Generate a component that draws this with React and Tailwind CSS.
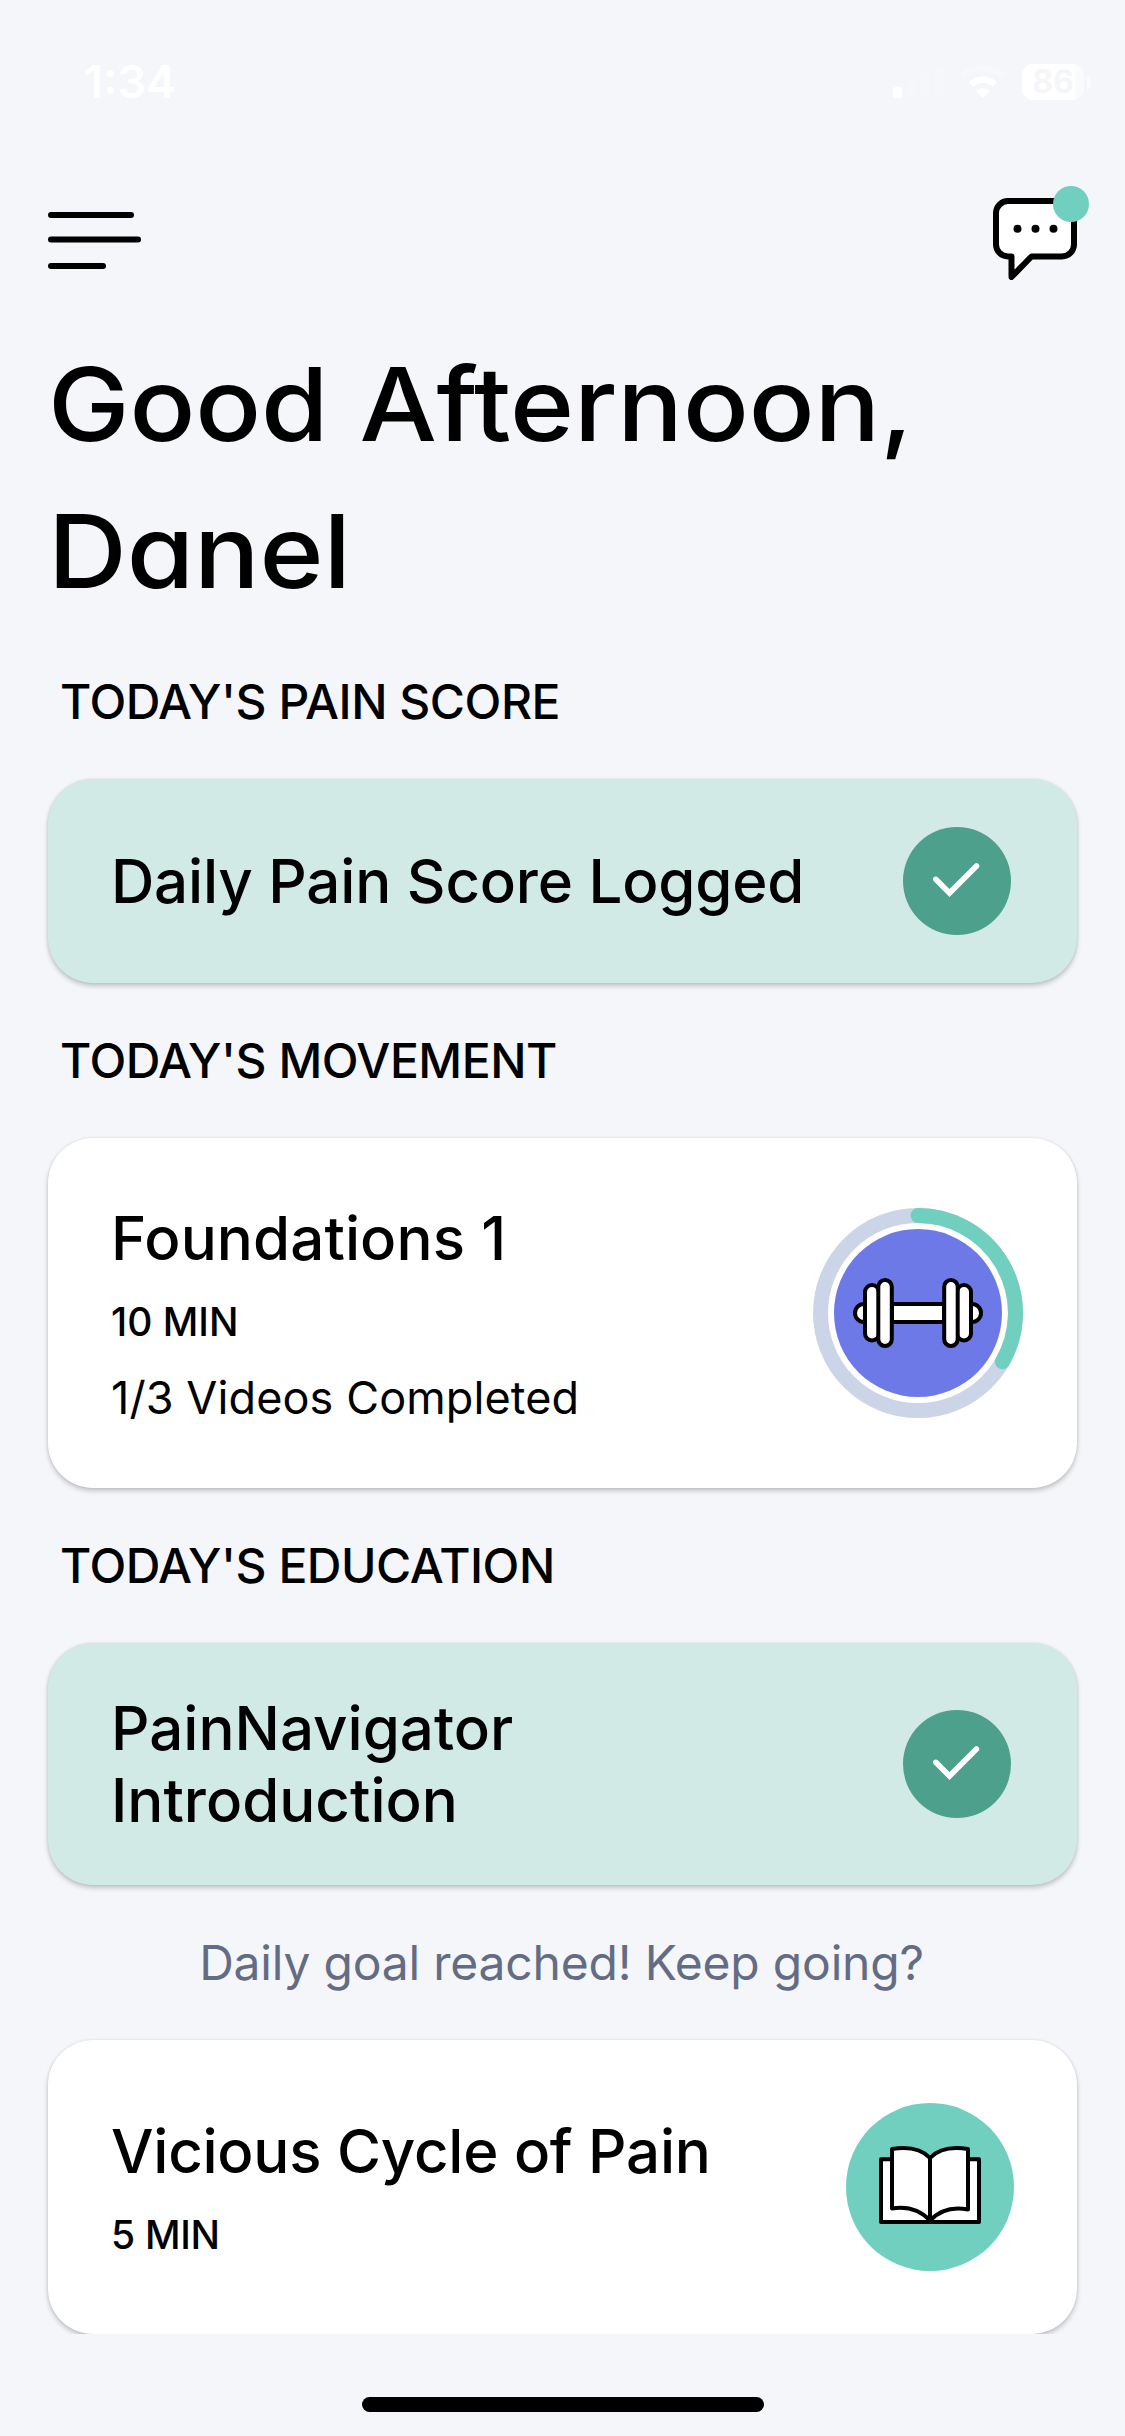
const INTER = "font-['Inter',sans-serif]";

function StatusBar() {
  return (
    <header className="flex h-[132px] items-start justify-between pl-[84px] pr-[34px] pt-[60px] text-white">
      <span className="text-[45px] leading-[44px] font-semibold">1:34</span>
      <div className="flex items-center pt-[4px]">
        <svg className="h-[36px] w-[52px]" viewBox="0 0 52 36" fill="#fff">
          <rect x="0" y="23" width="9" height="11" rx="2.5" />
          <rect x="14" y="17" width="9" height="17" rx="2.5" opacity=".2" />
          <rect x="28" y="10" width="9" height="24" rx="2.5" opacity=".2" />
          <rect x="42" y="2" width="9" height="32" rx="2.5" opacity=".2" />
        </svg>
        <svg className="ml-[14px] h-[36px] w-[48px]" viewBox="0 0 48 36" fill="none" stroke="#fff">
          <path d="M3 12.500a30 30 0 0 1 42 0" strokeWidth="7" opacity=".25" />
          <path d="M12 20.500a17.500 17.500 0 0 1 24 0" strokeWidth="6.500" />
          <path d="M24 34l-7-7a10 10 0 0 1 14 0z" fill="#fff" stroke="none" />
        </svg>
        <div className="ml-[15px] flex h-[36px] w-[62px] items-center justify-center rounded-[11px] bg-[linear-gradient(90deg,#fff_86%,#fafbfd_86%)] text-[32px] leading-[36px] font-bold text-[#f4f6fa]">
          86
        </div>
        <div className="ml-[3px] h-[13px] w-[4px] rounded-r-full bg-[#fafbfd]" />
      </div>
    </header>
  );
}

function TopBar() {
  return (
    <div className="flex h-[198px] items-start justify-between pl-[48px] pr-[36px] pt-[54px]">
      <svg className="mt-[26px] h-[58px] w-[93px]" viewBox="0 0 93 58">
        <rect x="0" y="0" width="86" height="6" rx="3" />
        <rect x="0" y="24.500" width="93" height="6" rx="3" />
        <rect x="0" y="51" width="58" height="6" rx="3" />
      </svg>
      <svg className="h-[94px] w-[96px]" viewBox="0 0 96 94">
        <path
          d="M15 15H69A12 12 0 0 1 81 27V58.500A12 12 0 0 1 69 70.500H38.500L18.500 91V70.500H15A12 12 0 0 1 3 58.500V27A12 12 0 0 1 15 15Z"
          fill="#fff"
          stroke="#000"
          strokeWidth="6"
          strokeLinejoin="round"
        />
        <circle cx="24.500" cy="42.700" r="4" />
        <circle cx="42.500" cy="42.700" r="4" />
        <circle cx="60.500" cy="42.700" r="4" />
        <circle cx="78" cy="18" r="18" fill="#70cfbe" />
      </svg>
    </div>
  );
}

function SectionTitle({ children }) {
  return <h2 className="pl-[12px] text-[48px] leading-[58px] font-medium tracking-[-0.48px]">{children}</h2>;
}

function Card({ className, children }) {
  return (
    <section
      className={
        "flex items-center justify-between rounded-[45px] pl-[63px] shadow-[0_3px_5px_rgba(0,0,0,0.2),0_0_3px_rgba(0,0,0,0.1)] " +
        className
      }
    >
      {children}
    </section>
  );
}

function CheckBadge() {
  return (
    <svg className="h-[108px] w-[108px]" viewBox="0 0 108 108">
      <circle cx="54" cy="54" r="54" fill="#4da08b" />
      <path d="M32.800 52.300L46.500 66L73.500 39" fill="none" stroke="#fff" strokeWidth="5.500" strokeLinecap="round" />
    </svg>
  );
}

function MovementBadge() {
  return (
    <svg className="h-[210px] w-[210px]" viewBox="0 0 210 210">
      <circle cx="105" cy="105" r="97.500" fill="none" stroke="#ccd5e8" strokeWidth="15" />
      <path d="M105 7.500A97.500 97.500 0 0 1 189.400 153.750" fill="none" stroke="#70cfbe" strokeWidth="15" strokeLinecap="round" />
      <circle cx="105" cy="105" r="84" fill="#6d79e7" />
      <g fill="#fff" stroke="#000" strokeWidth="4">
        <rect x="79" y="96" width="52" height="18" />
        <path d="M53 96H51A9 9 0 0 0 51 114H53Z" />
        <path d="M157 96H159A9 9 0 0 1 159 114H157Z" />
        <rect x="52" y="77" width="14" height="55.500" rx="7" />
        <rect x="144" y="77" width="14" height="55.500" rx="7" />
        <rect x="65.300" y="72" width="13.500" height="66" rx="6.700" />
        <rect x="131.200" y="72" width="13.500" height="66" rx="6.700" />
      </g>
    </svg>
  );
}

function BookBadge() {
  return (
    <svg className="h-[168px] w-[168px]" viewBox="0 0 168 168">
      <circle cx="84" cy="84" r="84" fill="#70cfbe" />
      <g fill="#fff" stroke="#000" strokeWidth="4" strokeLinejoin="round">
        <rect x="35" y="56.300" width="98" height="62.700" />
        <path d="M84 117.500C74 107 61 103 46 105.500V46C62 43.500 76 46.500 84 55C92 46.500 106 43.500 122 46V106.500C107 103.500 94 107 84 117.500Z" />
        <path d="M84 55V118" />
      </g>
    </svg>
  );
}

export default function App() {
  return (
    <div className={"flex h-[2436px] w-[1125px] flex-col overflow-hidden bg-[#f4f6fa] text-black " + INTER}>
      <StatusBar />
      <TopBar />
      <main className="h-[2004px] overflow-hidden px-[48px] pt-px">
        <h1 className="origin-left scale-x-[1.07] text-[102px] leading-[147px] font-medium tracking-[-0.1px] [word-spacing:2px] [font-feature-settings:'cv11'] [font-variant-ligatures:none]">
          Good Afternoon,
          <br />
          Danel
        </h1>
        <div className="mt-[48px]">
          <SectionTitle>TODAY'S PAIN SCORE</SectionTitle>
        </div>
        <Card className="mt-[48px] h-[204px] bg-[#d1eae5] pr-[66px]">
          <p className="text-[60px] leading-[72px] font-medium tracking-[-0.2px]">Daily Pain Score Logged</p>
          <CheckBadge />
        </Card>
        <div className="mt-[49px]">
          <SectionTitle>TODAY'S MOVEMENT</SectionTitle>
        </div>
        <Card className="mt-[48px] h-[350px] bg-white pr-[54px]">
          <div>
            <p className="text-[60px] leading-[72px] font-medium tracking-[0.1px]">Foundations 1</p>
            <p className="mt-[24px] text-[39px] leading-[48px] font-medium">10 MIN</p>
            <p className="mt-[25px] text-[45px] leading-[54px] tracking-[0.1px]">1/3 Videos Completed</p>
          </div>
          <MovementBadge />
        </Card>
        <div className="mt-[49px]">
          <SectionTitle>TODAY'S EDUCATION</SectionTitle>
        </div>
        <Card className="mt-[48px] h-[242px] bg-[#d1eae5] pr-[66px]">
          <p className="text-[60px] leading-[72px] font-medium">
            PainNavigator
            <br />
            Introduction
          </p>
          <CheckBadge />
        </Card>
        <p className="mt-[49px] pr-[2px] text-center text-[48px] leading-[58px] tracking-[-0.2px] text-[#646c83]">
          Daily goal reached! Keep going?
        </p>
        <Card className="mt-[48px] h-[294px] bg-white pr-[63px]">
          <div>
            <p className="text-[60px] leading-[72px] font-medium tracking-[-0.26px]">Vicious Cycle of Pain</p>
            <p className="mt-[24px] text-[39px] leading-[48px] font-medium tracking-[-0.3px]">5 MIN</p>
          </div>
          <BookBadge />
        </Card>
      </main>
      <footer className="flex justify-center pt-[63px]">
        <div className="h-[15px] w-[402px] rounded-full bg-black" />
      </footer>
    </div>
  );
}
